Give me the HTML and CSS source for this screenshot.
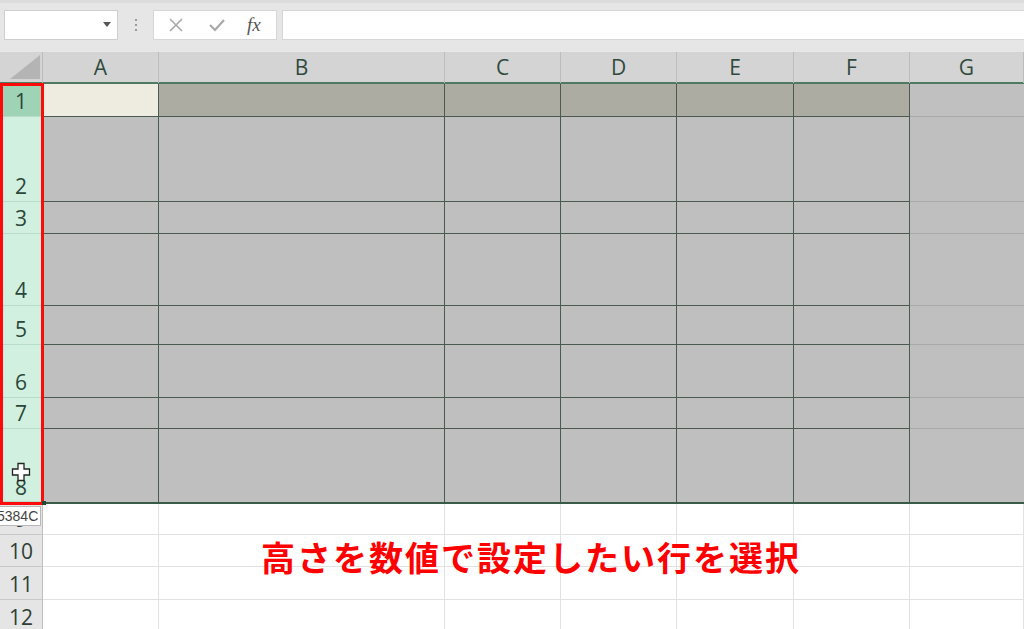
FILE: index.html
```html
<!DOCTYPE html>
<html lang="ja">
<head>
<meta charset="utf-8">
<title>Excel</title>
<link rel="stylesheet" href="styles.css">
</head>
<body>
<div class="app">
  <div class="toolbar">
    <div class="namebox"><span class="arrow"></span></div>
    <div class="dots"><i></i><i></i><i></i></div>
    <div class="fbtns">
      <svg class="ico" width="16" height="16" viewBox="0 0 16 16"><path d="M2 2 L14 14 M14 2 L2 14" stroke="#a8a8a8" stroke-width="1.6" fill="none"/></svg>
      <svg class="ico" width="18" height="16" viewBox="0 0 18 16"><path d="M2 8 L7 13 L16 3" stroke="#a8a8a8" stroke-width="2.2" fill="none"/></svg>
      <span class="fx">fx</span>
    </div>
    <div class="formula"></div>
  </div>

  <div class="sheet">
    <div class="row hdr">
      <div class="corner"><svg width="30" height="24" viewBox="0 0 30 24"><path d="M30 0 L30 24 L0 24 Z" fill="#b4b4b4"/></svg></div>
      <div class="ch">A</div><div class="ch">B</div><div class="ch">C</div><div class="ch">D</div><div class="ch">E</div><div class="ch">F</div><div class="ch">G</div>
    </div>

    <div class="row r1 sel">
      <div class="rh act">1</div>
      <div class="c active"></div><div class="c dk"></div><div class="c dk"></div><div class="c dk"></div><div class="c dk"></div><div class="c dk"></div><div class="c out"></div>
    </div>
    <div class="row r2 sel">
      <div class="rh">2</div>
      <div class="c"></div><div class="c"></div><div class="c"></div><div class="c"></div><div class="c"></div><div class="c"></div><div class="c out"></div>
    </div>
    <div class="row r3 sel">
      <div class="rh">3</div>
      <div class="c"></div><div class="c"></div><div class="c"></div><div class="c"></div><div class="c"></div><div class="c"></div><div class="c out"></div>
    </div>
    <div class="row r4 sel">
      <div class="rh">4</div>
      <div class="c"></div><div class="c"></div><div class="c"></div><div class="c"></div><div class="c"></div><div class="c"></div><div class="c out"></div>
    </div>
    <div class="row r5 sel">
      <div class="rh">5</div>
      <div class="c"></div><div class="c"></div><div class="c"></div><div class="c"></div><div class="c"></div><div class="c"></div><div class="c out"></div>
    </div>
    <div class="row r6 sel">
      <div class="rh">6</div>
      <div class="c"></div><div class="c"></div><div class="c"></div><div class="c"></div><div class="c"></div><div class="c"></div><div class="c out"></div>
    </div>
    <div class="row r7 sel">
      <div class="rh">7</div>
      <div class="c"></div><div class="c"></div><div class="c"></div><div class="c"></div><div class="c"></div><div class="c"></div><div class="c out"></div>
    </div>
    <div class="row r8 sel last">
      <div class="rh">8</div>
      <div class="c"></div><div class="c"></div><div class="c"></div><div class="c"></div><div class="c"></div><div class="c"></div><div class="c out"></div>
    </div>
    <div class="row r9 plain">
      <div class="rh">9</div>
      <div class="c"></div><div class="c"></div><div class="c"></div><div class="c"></div><div class="c"></div><div class="c"></div><div class="c"></div>
    </div>
    <div class="row r10 plain">
      <div class="rh">10</div>
      <div class="c"></div><div class="c"></div><div class="c"></div><div class="c"></div><div class="c"></div><div class="c"></div><div class="c"></div>
    </div>
    <div class="row r11 plain">
      <div class="rh">11</div>
      <div class="c"></div><div class="c"></div><div class="c"></div><div class="c"></div><div class="c"></div><div class="c"></div><div class="c"></div>
    </div>
    <div class="row r12 plain">
      <div class="rh">12</div>
      <div class="c"></div><div class="c"></div><div class="c"></div><div class="c"></div><div class="c"></div><div class="c"></div><div class="c"></div>
    </div>

    <div class="redbox"></div>
    <div class="handle"></div>
    <svg class="cursor" width="20" height="20" viewBox="0 0 20 20"><path d="M7 1.5 H13 V7 H18.5 V13 H13 V18.5 H7 V13 H1.5 V7 H7 Z" fill="#fff" stroke="#222" stroke-width="1.3"/></svg>
    <div class="tip"><span>5384C</span></div>
    <div class="note">高さを数値で設定したい行を選択</div>
  </div>
</div>
</body>
</html>
```
FILE: styles.css
```css
* { box-sizing: border-box; }
html, body { margin: 0; padding: 0; }
body { width: 1024px; height: 629px; overflow: hidden; background: #fff; font-family: "Open Sans", "Liberation Sans", sans-serif; }
.app { width: 1024px; height: 629px; overflow: hidden; }

.toolbar { height: 52px; background: #e6e6e6; border-top: 3px solid #dcdcdc; display: flex; align-items: flex-start; padding: 7px 0 0 4px; }
.namebox { width: 114px; height: 30px; background: #fff; border: 1px solid #cfcfcf; position: relative; }
.arrow { position: absolute; right: 6px; top: 11px; width: 0; height: 0; border-left: 4px solid transparent; border-right: 4px solid transparent; border-top: 5px solid #555; }
.dots { width: 35px; height: 30px; display: flex; flex-direction: column; align-items: center; justify-content: center; gap: 3px; }
.dots i { display: block; width: 2px; height: 2px; background: #9a9a9a; }
.fbtns { width: 124px; height: 30px; background: #fff; border: 1px solid #d6d6d6; display: flex; align-items: center; padding-left: 14px; gap: 24px; }
.fbtns .ico { display: block; }
.fx { font-family: "Liberation Serif", serif; font-style: italic; font-size: 19px; color: #555; margin-left: -3px; }
.formula { flex: 1; height: 30px; margin-left: 5px; background: #fff; border: 1px solid #d6d6d6; border-right: none; }

.sheet { position: relative; }
.row { display: grid; grid-template-columns: 43px 116px 286px 116px 116px 117px 116px 1fr; }
.hdr { height: 32px; background: #d4d4d4; border-bottom: 2px solid #4f7a62; }
.corner { border-right: 1px solid #bdbdbd; display: flex; align-items: flex-end; justify-content: flex-end; padding: 0 2px 4px 0; }
.ch { border-right: 1px solid #bdbdbd; text-align: center; font-size: 21px; line-height: 31px; color: #2f4a3c; }

.r1 { height: 33px; } .r2 { height: 85px; } .r3 { height: 32px; } .r4 { height: 72px; }
.r5 { height: 39px; } .r6 { height: 53px; } .r7 { height: 31px; } .r8 { height: 75px; }
.r9 { height: 31px; } .r10 { height: 32px; } .r11 { height: 33px; } .r12 { height: 33px; }

.rh { display: flex; align-items: flex-end; justify-content: center; font-size: 21px; line-height: 27px; padding-bottom: 1px; border-right: 1px solid #bdbdbd; border-bottom: 1px solid #c8c8c8; }
.sel .rh { background: #d2f0df; color: #2b463a; border-bottom-color: #b9dcc8; }
.sel .rh.act { background: #9fd3b6; }
.plain .rh { background: #e5e5e5; color: #2f3f36; }

.c { border-right: 1px solid #4a5a51; border-bottom: 1px solid #4a5a51; }
.sel .c { background: #bfbfbf; }
.sel .c.dk { background: #adaca2; }
.sel .c.active { background: #eeebe1; }
.sel .c.out { border-right: none; border-bottom-color: #a9a9a9; }
.r1 .c.out { background: #c0c0c0; }
.last { border-bottom: 2px solid #3a5a48; }
.last .c, .last .c.out { border-bottom: none; }
.last .rh { padding-bottom: 0; }
.plain .c { background: #fff; border-right: 1px solid #e1e1e1; border-bottom: 1px solid #e1e1e1; }

.redbox { position: absolute; left: 0; top: 31px; width: 44px; height: 422px; border: 3px solid #ff0a0a; }
.handle { position: absolute; left: 42px; top: 449px; width: 4px; height: 4px; background: #244a36; }
.cursor { position: absolute; left: 11px; top: 410px; }
.tip { position: absolute; left: 0; top: 454px; width: 41px; height: 20px; background: #fff; border: 1px solid #b8b8b8; border-left: none; overflow: hidden; font-family: "Liberation Sans", sans-serif; font-size: 14px; line-height: 18px; color: #444; white-space: nowrap; }
.tip span { display: block; margin-left: -3px; }
.note { position: absolute; left: 261px; top: 483px; font-family: "Noto Sans CJK JP", sans-serif; font-weight: 700; font-size: 34px; letter-spacing: 2px; line-height: 44px; color: #ff0000; white-space: nowrap; }
```
